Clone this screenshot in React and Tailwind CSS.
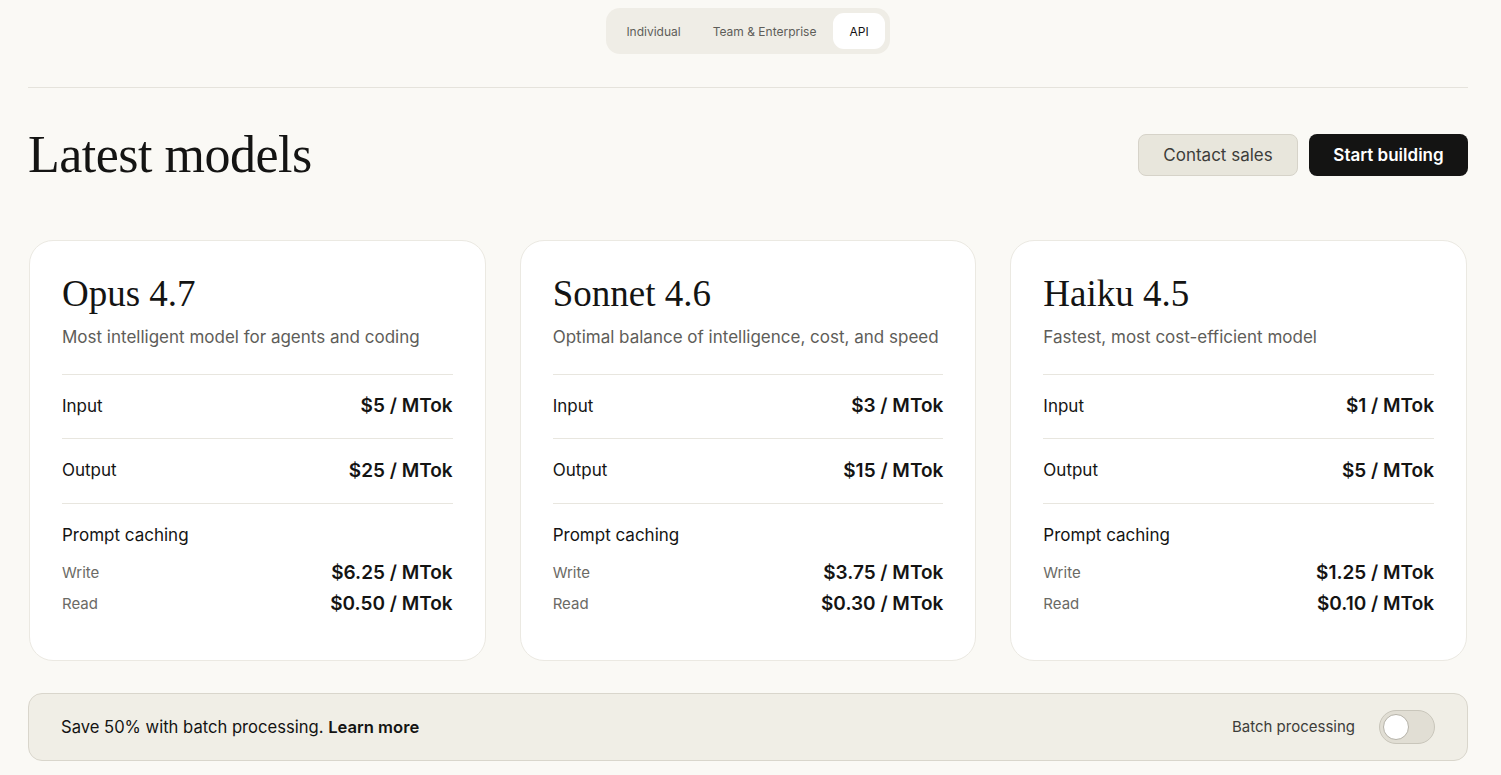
import React from "react";

const sans = { fontFamily: "Inter, 'Noto Sans', sans-serif" };
const serif = { fontFamily: "'Liberation Serif', 'DejaVu Serif', serif" };

const models = [
  { name: "Opus 4.7", desc: "Most intelligent model for agents and coding", input: "$5 / MTok", output: "$25 / MTok", write: "$6.25 / MTok", read: "$0.50 / MTok" },
  { name: "Sonnet 4.6", desc: "Optimal balance of intelligence, cost, and speed", input: "$3 / MTok", output: "$15 / MTok", write: "$3.75 / MTok", read: "$0.30 / MTok" },
  { name: "Haiku 4.5", desc: "Fastest, most cost-efficient model", input: "$1 / MTok", output: "$5 / MTok", write: "$1.25 / MTok", read: "$0.10 / MTok" },
];

function Card({ m }) {
  return (
    <div className="flex-1 bg-white border border-[#ebe9e2] rounded-[24px] px-8 pt-[33px] pb-[40px]">
      <h2 className="text-[37px] leading-[40px] text-[#141413]" style={serif}>{m.name}</h2>
      <p className="mt-[11px] text-[17px] leading-[24px] text-[#5e5d59]">{m.desc}</p>
      <div className="mt-[25px] border-t border-[#e8e6df]">
        <div className="flex justify-between items-center h-[64px] border-b border-[#e8e6df]">
          <span className="text-[17px] text-[#141413]">Input</span>
          <span className="text-[19px] font-semibold text-[#141413]">{m.input}</span>
        </div>
        <div className="flex justify-between items-center h-[65px] border-b border-[#e8e6df]">
          <span className="text-[17px] text-[#141413]">Output</span>
          <span className="text-[19px] font-semibold text-[#141413]">{m.output}</span>
        </div>
        <div className="pt-[19px]">
          <div className="text-[17px] leading-[24px] text-[#141413]">Prompt caching</div>
          <div className="mt-[11px] flex justify-between items-center h-[31px]">
            <span className="text-[15px] text-[#6b6a65]">Write</span>
            <span className="text-[19px] font-semibold text-[#141413]">{m.write}</span>
          </div>
          <div className="flex justify-between items-center h-[31px]">
            <span className="text-[15px] text-[#6b6a65]">Read</span>
            <span className="text-[19px] font-semibold text-[#141413]">{m.read}</span>
          </div>
        </div>
      </div>
    </div>
  );
}

export default function App() {
  return (
    <div className="min-h-[775px] bg-[#faf9f5] pl-[28px] pr-[33px]" style={sans}>
      <div className="flex justify-center pt-[8px]">
        <div className="flex items-center h-[46px] bg-[#efede6] rounded-[14px] p-[5px] gap-[2px]">
          <div className="px-[15px] pt-[1px] text-[12px] text-[#5e5d59]">Individual</div>
          <div className="px-[15px] pt-[1px] text-[12px] text-[#5e5d59]">Team &amp; Enterprise</div>
          <div className="h-[36px] flex items-center pt-[1px] px-[16px] bg-white rounded-[11px] text-[12px] text-[#141413]">API</div>
        </div>
      </div>
      <div className="mt-[33px] border-t border-[#e5e3dc]" />
      <div className="flex items-center justify-between mt-[39px]">
        <h1 className="text-[52px] leading-[56px] text-[#141413] tracking-[-0.5px]" style={serif}>Latest models</h1>
        <div className="flex gap-[11px]">
          <button className="h-[42px] w-[160px] pt-[2px] rounded-[8px] bg-[#e8e6dc] border border-[#d6d3c9] text-[17px] text-[#3d3d3a]">Contact sales</button>
          <button className="h-[42px] w-[159px] pt-[2px] rounded-[8px] bg-[#141413] text-[17px] font-semibold text-white">Start building</button>
        </div>
      </div>
      <div className="flex gap-[34px] mt-[57px] px-[1px]">
        {models.map((m) => <Card key={m.name} m={m} />)}
      </div>
      <div className="mt-[32px] h-[68px] bg-[#f0eee6] border border-[#d9d6cc] rounded-[14px] flex items-center justify-between pl-[32px] pr-[32px]">
        <div className="text-[16.6px] text-[#141413]">Save 50% with batch processing. <span className="font-semibold">Learn more</span></div>
        <div className="flex items-center gap-[24px]">
          <span className="text-[15px] text-[#3d3d3a]">Batch processing</span>
          <div className="w-[56px] h-[34px] rounded-full bg-[#e1ded4] border border-[#c9c6bb] flex items-center px-[3px]">
            <div className="w-[26px] h-[26px] rounded-full bg-white border border-[#b5b2a8]" />
          </div>
        </div>
      </div>
    </div>
  );
}
